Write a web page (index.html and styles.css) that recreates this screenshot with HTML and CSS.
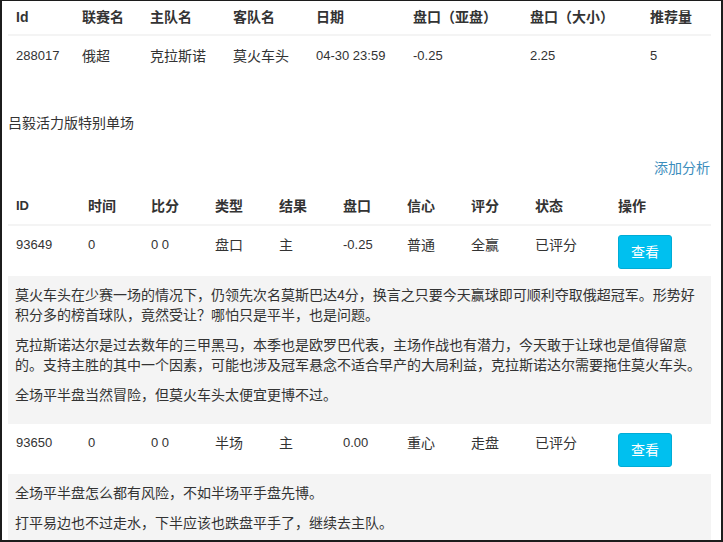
FILE: index.html
```html
<!DOCTYPE html>
<html lang="zh-CN">
<head>
<meta charset="utf-8">
<title>特别单场</title>
<link rel="stylesheet" href="styles.css">
</head>
<body>
<div class="frame">
  <table class="tbl tbl-match">
    <thead>
      <tr>
        <th class="w66">Id</th>
        <th class="w68">联赛名</th>
        <th class="w83">主队名</th>
        <th class="w83">客队名</th>
        <th class="w97">日期</th>
        <th class="w117">盘口（亚盘）</th>
        <th class="w120">盘口（大小）</th>
        <th class="w69">推荐量</th>
      </tr>
    </thead>
    <tbody>
      <tr>
        <td class="num">288017</td>
        <td>俄超</td>
        <td>克拉斯诺</td>
        <td>莫火车头</td>
        <td class="num">04-30 23:59</td>
        <td class="num">-0.25</td>
        <td class="num">2.25</td>
        <td class="num">5</td>
      </tr>
    </tbody>
  </table>

  <p class="title">吕毅活力版特别单场</p>
  <div class="actions"><a class="link" href="#">添加分析</a></div>

  <table class="tbl tbl-analysis">
    <thead>
      <tr>
        <th class="w72 cap">ID</th>
        <th class="w63">时间</th>
        <th class="w64">比分</th>
        <th class="w64">类型</th>
        <th class="w64">结果</th>
        <th class="w64">盘口</th>
        <th class="w64">信心</th>
        <th class="w64">评分</th>
        <th class="w83">状态</th>
        <th class="w101">操作</th>
      </tr>
    </thead>
    <tbody>
      <tr>
        <td class="num">93649</td>
        <td class="num">0</td>
        <td class="num">0 0</td>
        <td>盘口</td>
        <td>主</td>
        <td class="num">-0.25</td>
        <td>普通</td>
        <td>全赢</td>
        <td>已评分</td>
        <td><a class="btn-info" href="#">查看</a></td>
      </tr>
      <tr class="detail">
        <td colspan="10">
          <p>莫火车头在少赛一场的情况下，仍领先次名莫斯巴达4分，换言之只要今天赢球即可顺利夺取俄超冠军。形势好积分多的榜首球队，竟然受让？哪怕只是平半，也是问题。</p>
          <p>克拉斯诺达尔是过去数年的三甲黑马，本季也是欧罗巴代表，主场作战也有潜力，今天敢于让球也是值得留意的。支持主胜的其中一个因素，可能也涉及冠军悬念不适合早产的大局利益，克拉斯诺达尔需要拖住莫火车头。</p>
          <p>全场平半盘当然冒险，但莫火车头太便宜更博不过。</p>
        </td>
      </tr>
      <tr>
        <td class="num">93650</td>
        <td class="num">0</td>
        <td class="num">0 0</td>
        <td>半场</td>
        <td>主</td>
        <td class="num">0.00</td>
        <td>重心</td>
        <td>走盘</td>
        <td>已评分</td>
        <td><a class="btn-info" href="#">查看</a></td>
      </tr>
      <tr class="detail">
        <td colspan="10">
          <p>全场平半盘怎么都有风险，不如半场平手盘先博。</p>
          <p>打平易边也不过走水，下半应该也跌盘平手了，继续去主队。</p>
        </td>
      </tr>
    </tbody>
  </table>
</div>
</body>
</html>
```

FILE: styles.css
```css
* { box-sizing: border-box; }

html, body {
  margin: 0;
  padding: 0;
  background: #fff;
}

body {
  font-family: "Liberation Sans", "Noto Sans CJK SC", sans-serif;
  font-size: 14px;
  line-height: 20px;
  color: #333;
}

.frame {
  width: 723px;
  height: 542px;
  overflow: hidden;
  border-style: solid;
  border-color: #1c1c1c;
  border-width: 1px 2px 2px 2px;
  padding: 0 10px 0 6px;
}

.tbl {
  width: 100%;
  table-layout: fixed;
  border-collapse: collapse;
  border-spacing: 0;
}

.tbl th {
  text-align: left;
  font-weight: bold;
  padding: 8px;
  border-bottom: 2px solid #f4f4f4;
  white-space: nowrap;
}

.tbl td {
  padding: 9px 8px 7px;
  vertical-align: top;
  border-top: 1px solid #f4f4f4;
  white-space: nowrap;
}

.tbl-match th { padding: 6px 8px 7px; }
.tbl-match td { border-top: 0; padding: 10px 8px 6px; }

.num { font-size: 13px; }
.cap { font-size: 13px; }

.w63 { width: 63px; }
.w64 { width: 64px; }
.w66 { width: 66px; }
.w68 { width: 68px; }
.w69 { width: 69px; }
.w72 { width: 72px; }
.w83 { width: 83px; }
.w97 { width: 97px; }
.w101 { width: 101px; }
.w117 { width: 117px; }
.w120 { width: 120px; }

.title {
  margin: 41px 0 0;
}

.actions {
  margin-top: 25px;
  text-align: right;
  padding-right: 1px;
}

.link {
  color: #3c8dbc;
  text-decoration: none;
}

.tbl-analysis { margin-top: 10px; }

.btn-info {
  display: inline-block;
  padding: 6px 12px;
  font-size: 14px;
  line-height: 20px;
  color: #fff;
  background: #00c0ef;
  border: 1px solid #00acd6;
  border-radius: 3px;
  text-decoration: none;
}

.detail td {
  background: #f4f4f4;
  white-space: normal;
  padding: 8px 8px 8px 7px;
}

.detail p {
  margin: 0 0 10px;
}
```
